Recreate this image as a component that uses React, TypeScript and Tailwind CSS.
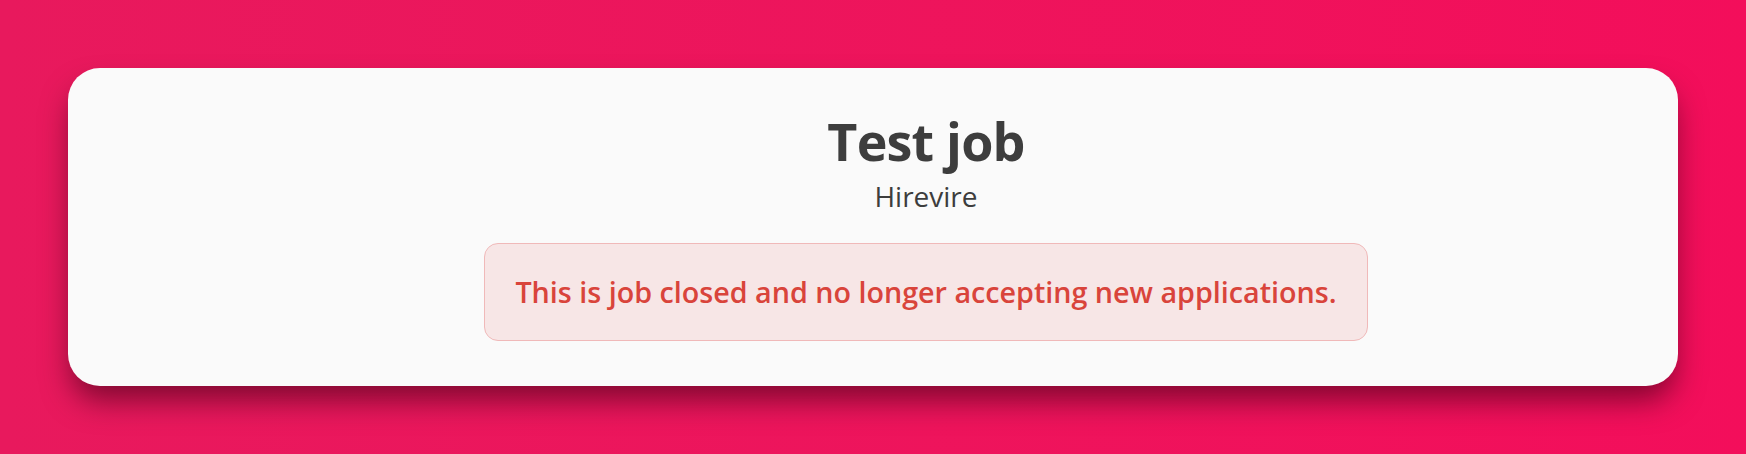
export default function App() {
  return (
    <div className="flex h-[454px] w-[1746px] items-start bg-gradient-to-r from-[#e8195d] to-[#f30e5b] px-[68px] pt-[68px] font-['Open_Sans',sans-serif]">
      <div className="flex h-[318px] w-full flex-col items-center rounded-[32px] bg-[#fafafa] pl-[106px] pt-[40px] shadow-[0_18px_30px_-4px_rgba(70,0,25,0.65)]">
        <h1 className="text-[52px] font-bold leading-[66px] tracking-[-0.8px] text-[#3d3d3d]">Test job</h1>
        <p className="mt-[3px] text-[28px] leading-[38px] text-[#3d3d3d]">Hirevire</p>
        <div className="mt-[28px] flex h-[98px] w-[884px] items-center justify-center rounded-[14px] border border-[#f0b9b9] bg-[#f7e6e6] px-[24px]">
          <p className="text-center text-[28.7px] font-semibold text-[#d9443b]">
            This is job closed and no longer accepting new applications.
          </p>
        </div>
      </div>
    </div>
  );
}
